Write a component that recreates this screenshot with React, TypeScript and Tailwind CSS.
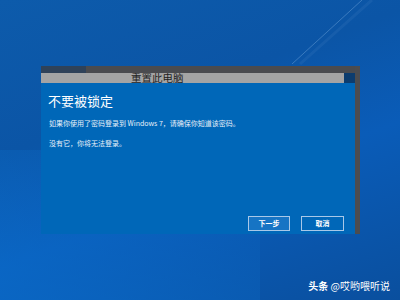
import React from 'react';

export default function App() {
    return (
        <div
            className="relative w-[400px] h-[300px] overflow-hidden bg-[linear-gradient(160deg,#0d5bab_0%,#0b55a6_35%,#0a5cb8_60%,#0a4f9e_100%)]"
            style={{ fontFamily: '"Noto Sans CJK SC", "Noto Sans", sans-serif' }}
        >
            {/* wallpaper light streak */}
            <svg className="absolute left-0 top-0" width="400" height="300">
                <defs>
                    <linearGradient id="glow" x1="0" y1="1" x2="1" y2="0">
                        <stop offset="0" stopColor="#0a70d0" stopOpacity="0.55" />
                        <stop offset="1" stopColor="#0a70d0" stopOpacity="0" />
                    </linearGradient>
                </defs>
                <rect x="0" y="150" width="260" height="150" fill="url(#glow)" />
                <line x1="362" y1="0" x2="292" y2="64" stroke="#6aa0d8" strokeOpacity="0.5" strokeWidth="1" />
                <line x1="372" y1="0" x2="300" y2="64" stroke="#5a90cc" strokeOpacity="0.15" strokeWidth="3" />
            </svg>

            <div className="relative pt-[66px] pl-[41px]">
                <div className="flex w-[319px] h-[168px]">
                    <div className="flex flex-col w-[314px]">
                        <div className="flex h-[7px]">
                            <div className="w-[45px] bg-[#2f4259]" />
                            <div className="flex-1 bg-[#4a4b4f]" />
                        </div>
                        <div className="flex h-[10px]">
                            <div className="flex-1 bg-[#a4a4a4] pl-[90px] text-[10.5px] leading-[10px] text-[#1e1e1e]">
                                重置此电脑
                            </div>
                            <div className="w-[11px] bg-[#0c3c6e]" />
                        </div>
                        <div className="flex flex-col flex-1 bg-[#0067b8] pl-[7px] pt-[10px] pr-[11px] pb-[3px] text-white">
                            <div className="text-[13px] leading-[15px]">不要被锁定</div>
                            <div className="mt-[10px] pl-[1px] text-[7px] leading-[10px] text-[#e8f0f8]">
                                如果你使用了密码登录到 Windows 7，请确保你知道该密码。
                            </div>
                            <div className="mt-[10px] pl-[1px] text-[7px] leading-[10px] text-[#e8f0f8]">
                                没有它，你将无法登录。
                            </div>
                            <div className="mt-auto flex justify-end gap-[11px]">
                                <button className="w-[42px] h-[15px] border border-[#a8c8e8] bg-[#1674c4] text-[7px] leading-[13px] font-bold text-white">
                                    下一步
                                </button>
                                <button className="w-[43px] h-[15px] border border-[#a8c8e8] bg-[#0067b8] text-[7px] leading-[13px] font-bold text-white">
                                    取消
                                </button>
                            </div>
                        </div>
                    </div>
                    <div className="w-[5px] bg-[#4b4c50]" />
                </div>
            </div>

            <div className="absolute right-[10px] bottom-[8px] text-[10px] leading-[12px] text-white">
                <span className="font-bold">头条</span> @哎哟喂听说
            </div>
        </div>
    );
}
